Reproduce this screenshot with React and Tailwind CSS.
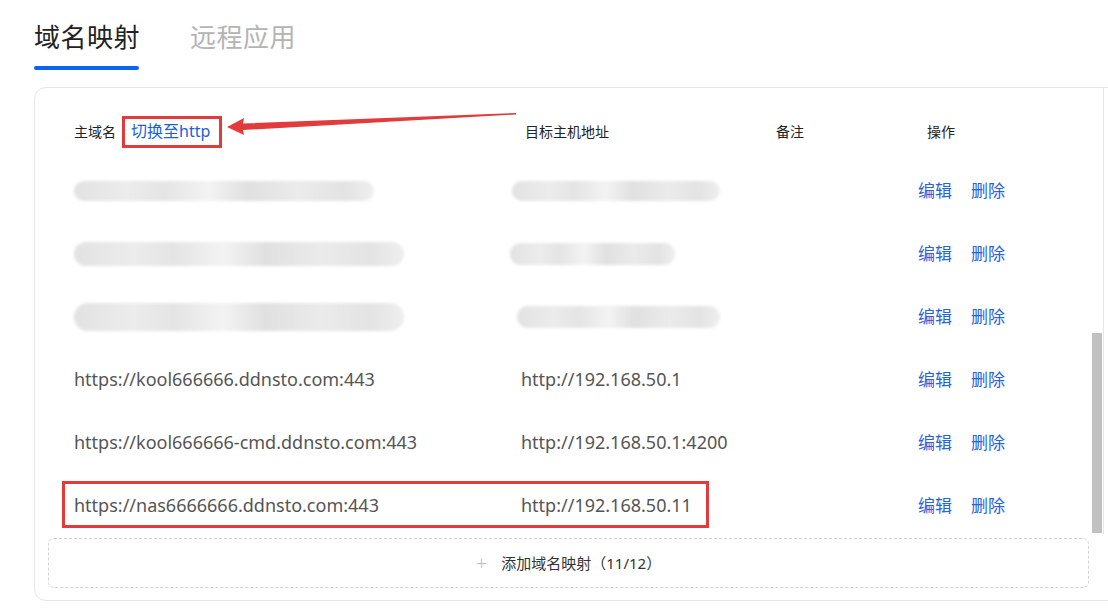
import React from "react";

const font = { fontFamily: '"Microsoft YaHei", "Noto Sans", "Noto Sans CJK SC", sans-serif' };

const rows = [
  { blur: [[300, 20, 0], [208, 20, -9]] },
  { blur: [[330, 24, 0], [165, 22, -11]] },
  { blur: [[330, 28, 0], [203, 22, -4]] },
  { host: "https://kool666666.ddnsto.com:443", target: "http://192.168.50.1" },
  { host: "https://kool666666-cmd.ddnsto.com:443", target: "http://192.168.50.1:4200" },
  { host: "https://nas6666666.ddnsto.com:443", target: "http://192.168.50.11" },
];

const Smudge = ({ w, h }) => (
  <div
    className="rounded-full blur-[1.5px] bg-[linear-gradient(90deg,#e2e2e2_0%,#ececec_18%,#e4e4e4_30%,#f3f3f3_45%,#e0e0e0_58%,#ebebeb_75%,#e3e3e3_90%,#efefef_100%)]"
    style={{ width: w, height: h }}
  />
);

export default function App() {
  return (
    <div className="relative w-[1108px] h-[610px] overflow-hidden bg-white" style={font}>
      <div className="pl-[34px] pt-[18px] flex gap-[50px]">
        <div className="flex flex-col">
          <div className="text-[26px] leading-[38px] text-[#222] tracking-[0.5px]">域名映射</div>
          <div className="mt-[10px] h-[4px] w-[105px] rounded-full bg-[#0b63ee]" />
        </div>
        <div className="text-[26px] leading-[38px] text-[#b4b4b4] tracking-[0.5px]">远程应用</div>
      </div>

      <div className="ml-[34px] mt-[17px] w-[1100px] h-[514px] rounded-[12px] border border-[#e6e6e6] flex flex-col">
        <div className="flex-1 relative overflow-hidden">
          <div className="pl-[39px] pt-[31px] w-[1055px]">
            <div className="grid grid-cols-[447px_255px_142px_1fr] h-[22px] items-center text-[14px] text-[#222]">
              <div className="flex items-center gap-[15px]">
                <span>主域名</span>
                <span className="text-[#1c5fd8] text-[16px]">切换至http</span>
              </div>
              <div className="pl-[4px]">目标主机地址</div>
              <div>备注</div>
              <div className="pl-[9px]">操作</div>
            </div>
            <div className="mt-[18px]">
              {rows.map((r, i) => (
                <div key={i} className="grid grid-cols-[447px_255px_142px_1fr] h-[63px] items-center text-[18px] text-[#555]">
                  <div>{r.host ? r.host : <Smudge w={r.blur[0][0]} h={r.blur[0][1]} />}</div>
                  <div>
                    {r.target ? r.target : (
                      <div style={{ marginLeft: r.blur[1][2] }}>
                        <Smudge w={r.blur[1][0]} h={r.blur[1][1]} />
                      </div>
                    )}
                  </div>
                  <div />
                  <div className="flex gap-[19px] text-[#2a63d9] text-[17px]">
                    <span>编辑</span>
                    <span>删除</span>
                  </div>
                </div>
              ))}
            </div>
          </div>
          <div className="absolute left-[1068px] top-0 bottom-0 w-[1px] bg-[#e8e8e8]" />
          <div className="absolute left-[1057px] top-[245px] w-[10px] h-[200px] bg-[#c1c1c1]" />
        </div>
        <div className="mx-[13px] mb-[12px] mt-[4px] h-[50px] rounded-[6px] border border-dashed border-[#d2d2d2] flex items-center justify-center gap-[14px] text-[15px] text-[#333] w-[1041px]">
          <span className="text-[#bdbdbd] text-[20px] leading-none font-light">+</span>
          <span>添加域名映射（11/12）</span>
        </div>
      </div>

      {/* annotations */}
      <div className="absolute left-[122px] top-[116px] w-[100px] h-[32px] border-[3px] border-[#e23b3b]" />
      <div className="absolute left-[62px] top-[481px] w-[647px] h-[47px] border-[3px] border-[#e23b3b]" />
      <svg className="absolute left-0 top-0" width="1108" height="610">
        <polygon points="227,127 244,118 243,123.5 516,113 516,114.5 243,130 244,135" fill="#e23b3b" />
      </svg>
    </div>
  );
}
